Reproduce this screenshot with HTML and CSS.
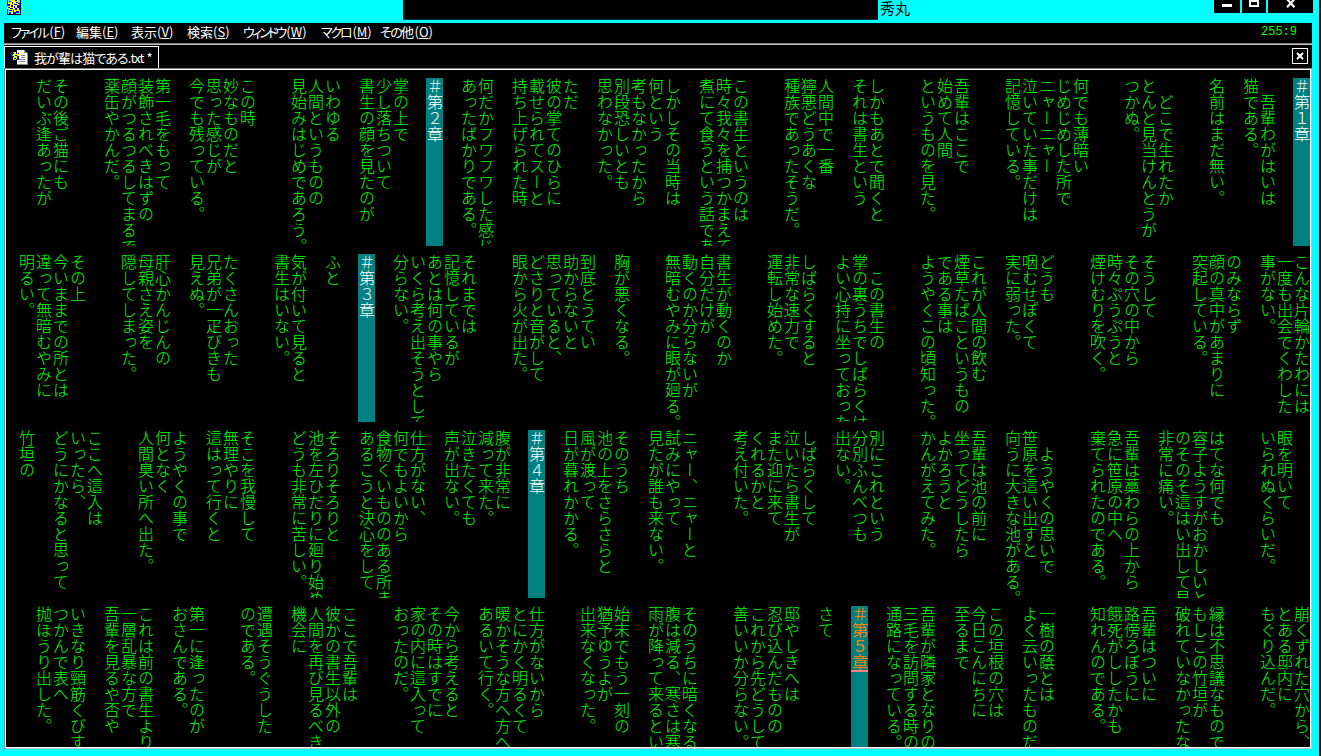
FILE: index.html
```html
<!DOCTYPE html>
<html lang="ja">
<head>
  <meta charset="UTF-8" />
  <title>我が輩は猫である.txt - 秀丸</title>
  <link rel="stylesheet" href="styles.css">
</head>
<body>
  <div class="window">
    <div class="titlebar">
      <svg class="app-icon" width="14" height="15" viewBox="0 0 14 15" shape-rendering="crispEdges">
        <path fill="#000" d="M0 0h14v15H0z"/>
        <path fill="#0ff" d="M1 0h12v14H1z"/>
        <path fill="#ff0" d="M3 0h8v2H3zM1 2h11v3H1zM0 5h12v4H0zM2 9h11v3H2zM2 12h4v2H2zM8 12h4v1H8z"/>
        <path fill="#00f" d="M8 0h2v1H8zM2 1h2v1H2zM5 2h1v2H5zM9 2h2v1H9zM11 3h3v1h-3zM0 4h3v2H0zM7 4h3v1H7zM4 5h2v2H4zM10 5h3v3h-3zM7 6h1v2H7zM1 7h2v1H1zM12 8h1v2h-1zM3 8h3v1H3zM8 8h2v2H8zM2 10h3v1H2zM6 10h1v2H6zM9 11h3v2H9zM2 12h2v2H2zM6 12h3v2H6z"/>
      </svg>
      <div class="mask"></div>
      <div class="title">秀丸</div>
      <div class="controls">
        <div class="ctl min"><svg width="10" height="7" shape-rendering="crispEdges"><path fill="#fff" d="M0 4h10v3H0z"/></svg></div>
        <div class="ctl max"><svg width="10" height="7" shape-rendering="crispEdges"><path fill="#fff" fill-rule="evenodd" d="M0 0h10v7H0zM2 2v3h6V2z"/></svg></div>
        <div class="ctl close"><svg width="10" height="8"><path fill="none" stroke="#fff" stroke-width="2.2" d="M1 -1L8.5 7.3M8.5 -1L1 7.3"/></svg></div>
      </div>
    </div>

    <div class="menubar">
      <span class="m1"><i>ファイル</i>(<u>F</u>)</span>
      <span class="m2">編集(<u>E</u>)</span>
      <span class="m3">表示(<u>V</u>)</span>
      <span class="m4">検索(<u>S</u>)</span>
      <span class="m5"><i>ウィンドウ</i>(<u>W</u>)</span>
      <span class="m6"><i>マクロ</i>(<u>M</u>)</span>
      <span class="m7"><i>その他</i>(<u>O</u>)</span>
      <div class="pos">255:9</div>
    </div>

    <div class="tabbar">
      <div class="tab">
        <svg width="16" height="16" viewBox="0 0 16 16" shape-rendering="crispEdges">
          <path fill="#fff" d="M5 0h7l3 3v12H5z"/>
          <path fill="#888" d="M12 0v3h3zM9 5h4v1H9zM9 7h4v1H9zM7 9h6v1H7zM7 11h6v1H7zM15 3h1v12h-1zM5 14h11v1H5z"/>
          <path fill="#ff0" d="M1 2h6v8H1z"/>
          <path fill="#00f" d="M0 3h2v1H0zM4 2h1v2H4zM6 3h1v1H6zM0 6h2v1H0zM3 5h2v1H3zM5 6h2v3H5zM2 8h2v1H2zM4 9h3v1H4z"/>
          <path fill="#0ff" d="M1 2h1v1H1zM0 5h1v1H0zM3 7h1v1H3zM1 9h1v1H1z"/>
        </svg>
        <span>我が輩は猫である.txt <b>*</b></span>
      </div>
      <div class="tab-close"><svg width="8" height="8"><path fill="none" stroke="#fff" stroke-width="2" d="M1 1L7 7M7 1L1 7"/></svg></div>
    </div>

    <div class="editor" id="editor"></div>
  </div>

  <script src="script.js"></script>
</body>
</html>
```
FILE: styles.css
```css
* {
  box-sizing: border-box;
  margin: 0;
  padding: 0;
}

body {
  width: 1321px;
  height: 756px;
  background: #000;
  overflow: hidden;
  font-family: "Noto Sans CJK JP", sans-serif;
}

.window {
  width: 1319px;
  height: 756px;
  background: #0ff;
  padding: 0 7px 7px 4px;
  display: flex;
  flex-direction: column;
}

.titlebar {
  height: 23px;
  display: flex;
  align-items: flex-start;
  padding-left: 3px;
}

.mask {
  width: 475px;
  height: 20px;
  margin-left: 382px;
  background: #000;
  border-bottom: 1px solid #033;
}

.title {
  margin-left: 2px;
  font-size: 15px;
  line-height: 16px;
  color: #000;
}

.controls {
  display: flex;
  gap: 2px;
  margin-left: auto;
  margin-right: -1px;
}

.ctl {
  height: 13px;
  background: #000;
  display: flex;
  justify-content: center;
}

.min { width: 26px; }
.max { width: 24px; }
.close { width: 45px; }

/* menu */
.menubar {
  height: 20px;
  background: #000;
  color: #fff;
  display: flex;
  padding-left: 7px;
  font-size: 13px;
  line-height: 18px;
  white-space: nowrap;
}

.menubar i {
  font-style: normal;
  font-feature-settings: "palt";
  letter-spacing: -2.2px;
  margin-right: 2px;
}

.menubar u {
  text-underline-offset: 1px;
}

.m1 { width: 65px; }
.m2 { width: 55px; }
.m3 { width: 56px; }
.m4 { width: 56px; }
.m5 { width: 78px; }
.m6 { width: 59px; }
.m7 { width: 60px; }

.m5 i { letter-spacing: -2.8px; }
.m7 i { letter-spacing: -1.6px; }

.pos {
  margin-left: auto;
  margin-right: 15px;
  font-family: "Liberation Mono", monospace;
  font-size: 12px;
  color: #0f0;
}

/* tabs */
.tabbar {
  height: 25px;
  background: #000;
  border-top: 1px solid #808080;
  box-shadow: inset 0 1px 0 #c0c0c0;
  display: flex;
  justify-content: space-between;
  padding-top: 2px;
}

.tab {
  width: 155px;
  height: 22px;
  border: 1px solid #fff;
  border-bottom: none;
  color: #fff;
  display: flex;
  align-items: center;
  gap: 6px;
  padding-left: 7px;
  font-size: 13px;
  line-height: 20px;
  white-space: nowrap;
}

.tab span {
  font-feature-settings: "palt";
  letter-spacing: -0.9px;
}

.tab b {
  margin-left: 1px;
  font-weight: 400;
}

.tab-close {
  width: 16px;
  height: 16px;
  margin: 2px 4px 0 0;
  border: 1px solid #fff;
  display: flex;
  align-items: center;
  justify-content: center;
}

/* text area */
.editor {
  flex: 1;
  min-height: 0;
  background: #000;
  border: 1px solid;
  border-color: #808080 #c0c0c0 #c0c0c0 #808080;
  box-shadow: inset 0 0 0 1px #fff;
  padding: 9px 1px 1px;
  overflow: hidden;
  display: flex;
  flex-direction: column;
  gap: 8px;
}

.band {
  flex: 0 1 168px;
  min-height: 0;
  overflow: hidden;
  writing-mode: vertical-rl;
  font-size: 16px;
  font-weight: 300;
  line-height: 17px;
  color: #0f0;
  white-space: pre;
}

.band:not(:last-child) {
  flex-shrink: 0;
}

.line {
  width: 17px;
  height: 100%;
}

.heading {
  position: relative;
  background: #008080;
  color: #fff;
}

.current {
  color: #ff8000;
  font-weight: 400;
}

.caret {
  position: absolute;
  left: 0;
  top: 64px;
  width: 17px;
  height: 2px;
  background: #ff8080;
}
```
FILE: script.js
```js
const bands = [
`＃第１章

　吾輩わがはいは
猫である。

名前はまだ無い。


　どこで生れたか
とんと見当けんとうが
つかぬ。


何でも薄暗い
じめじめした所で
ニャーニャー
泣いていた事だけは
記憶している。


吾輩はここで
始めて人間
というものを見た。


しかもあとで聞くと
それは書生という

人間中で一番
獰悪どうあくな
種族であったそうだ。


この書生というのは
時々我々を捕つかまえて
煮にて食うという話であ

しかしその当時は
何という
考もなかったから
別段恐しいとも
思わなかった。

ただ
彼の掌てのひらに
載せられてスーと
持ち上げられた時

何だかフワフワした感じ
あったばかりである。

＃第２章

掌の上で
少し落ちついて
書生の顔を見たのが

いわゆる
人間というものの
見始みはじめであろう。


この時
妙なものだと
思った感じが
今でも残っている。

第一毛をもって
装飾されべきはずの
顔がつるつるしてまるで
薬缶やかんだ。


その後ご猫にも
だいぶ逢あったが`,

`こんな片輪かたわには
一度も出会でくわした
事がない。

のみならず
顔の真中があまりに
突起している。


そうして
その穴の中から
時々ぷうぷうと
煙けむりを吹く。


どうも
咽むせぽくて
実に弱った。

これが人間の飲む
煙草たばこというもの
である事は
ようやくこの頃知った。


　この書生の
掌の裏うちでしばらくは
よい心持に坐っておった

しばらくすると
非常な速力で
運転し始めた。


書生が動くのか
自分だけが
動くのか分らないが
無暗むやみに眼が廻る。


胸が悪くなる。

到底とうてい
助からないと
思っていると、
どさりと音がして
眼から火が出た。


それまでは
記憶しているが
あとは何の事やら
いくら考え出そうとして
分らない。

＃第３章

ふと

気が付いて見ると
書生はいない。


たくさんおった
兄弟が一疋びきも
見えぬ。

肝心かんじんの
母親さえ姿を
隠してしまった。


その上
今いままでの所とは
違って無暗むやみに
明るい。`,

`
眼を明いて
いられぬくらいだ。


はてな何でも
容子ようすがおかしいと
のそのそ這はい出して見
非常に痛い。

吾輩は藁わらの上から
急に笹原の中へ
棄てられたのである。


　ようやくの思いで
笹原を這い出すと
向うに大きな池がある。

吾輩は池の前に
坐ってどうしたら
よかろうと
かんがえてみた。


別にこれという
分別ふんべつも
出ない。

しばらくして
泣いたら書生が
また迎に来て
くれるかと
考え付いた。


ニャー、ニャーと
試みにやって
見たが誰も来ない。

そのうち
池の上をさらさらと
風が渡って
日が暮れかかる。

＃第４章

腹が非常に
減って来た。
泣きたくても
声が出ない。

仕方がない、
何でもよいから
食物くいもののある所ま
あるこうと決心をして

そろりそろりと
池を左ひだりに廻り始め
どうも非常に苦しい。


そこを我慢して
無理やりに
這はって行くと

ようやくの事で
何となく
人間臭い所へ出た。


ここへ這入は
いったら、
どうにかなると思って

竹垣の`,

`崩くずれた穴から、
とある邸内に
もぐり込んだ。


縁は不思議なもので
もしこの竹垣が
破れていなかったな

吾輩はついに
路傍ろぼうに
餓死がししたかも
知れんのである。


一樹の蔭とは
よく云いったものだ

この垣根の穴は
今日こんにちに
至るまで

吾輩が隣家となりの
三毛を訪問する時の
通路になっている。

＃第５章

さて

邸やしきへは
忍び込んだものの
これから先どうして
善いいか分らない。


そのうちに暗くなる
腹は減る、寒さは寒
雨が降って来るとい

始末でもう一刻の
猶予ゆうよが
出来なくなった。


仕方がないから
とにかく明るくて
暖かそうな方へ方へ
あるいて行く。

今から考えると
その時はすでに
家の内に這入って
おったのだ。


ここで吾輩は
彼かの書生以外の
人間を再び見るべき
機会に

遭遇そうぐうした
のである。


第一に逢ったのが
おさんである。

これは前の書生より
一層乱暴な方で
吾輩を見るや否や

いきなり頸筋くびす
つかんで表へ
抛ほうり出した。`
];

const editor = document.getElementById("editor");

bands.forEach(text => {
  const band = document.createElement("div");
  band.className = "band";

  text.split("\n").forEach(str => {
    const line = document.createElement("div");
    line.className = "line";
    line.textContent = str;
    if (str.startsWith("＃")) {
      line.classList.add("heading");
    }
    // the caret sits at the end of chapter 5
    if (str === "＃第５章") {
      line.classList.add("current");
      const caret = document.createElement("div");
      caret.className = "caret";
      line.appendChild(caret);
    }
    band.appendChild(line);
  });

  editor.appendChild(band);
});
```
